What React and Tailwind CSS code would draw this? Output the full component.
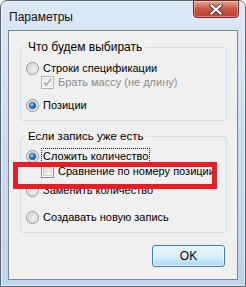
import React from "react";

const Radio = ({ checked }) => (
  <svg width="13" height="13" viewBox="0 0 13 13" className="shrink-0">
    <defs>
      <linearGradient id="rb" x1="0" y1="0" x2="1" y2="1">
        <stop offset="0" stopColor="#d6d6d6" />
        <stop offset="1" stopColor="#f8f8f8" />
      </linearGradient>
      <radialGradient id="rdot" cx="0.4" cy="0.35" r="0.7">
        <stop offset="0" stopColor="#b8e6ff" />
        <stop offset="0.45" stopColor="#2a8ad8" />
        <stop offset="1" stopColor="#0d3f7a" />
      </radialGradient>
    </defs>
    <circle cx="6.5" cy="6.5" r="6" fill="#f4f4f4" stroke="#8e8f8f" strokeWidth="1" />
    <circle cx="6.5" cy="6.5" r="4.5" fill="url(#rb)" stroke="#c8c8c8" strokeWidth="0.6" />
    {checked && <circle cx="6.5" cy="6.5" r="3.3" fill="url(#rdot)" stroke="#1b4f86" strokeWidth="0.5" />}
  </svg>
);

const Check = ({ checked, disabled }) => (
  <svg width="13" height="13" viewBox="0 0 13 13" className="shrink-0">
    <defs>
      <linearGradient id="cb" x1="0" y1="0" x2="1" y2="1">
        <stop offset="0" stopColor="#d8d8d8" />
        <stop offset="1" stopColor="#f9f9f9" />
      </linearGradient>
    </defs>
    <rect x="0.5" y="0.5" width="12" height="12" fill="#fcfcfc" stroke={disabled ? "#b5b5b5" : "#8e8f8f"} />
    <rect x="2.5" y="2.5" width="8" height="8" fill={disabled ? "#f4f4f4" : "url(#cb)"} stroke={disabled ? "#dedede" : "#c3c3c3"} strokeWidth="0.8" />
    {checked && (
      <path d="M3.3 6.6 L5.3 9 L9.7 3.2" fill="none" stroke={disabled ? "#a9a9a9" : "#3a5f8a"} strokeWidth="1.6" />
    )}
  </svg>
);

const Row = ({ className, children }) => (
  <div className={`flex items-center h-[14px] whitespace-nowrap ${className}`}>{children}</div>
);

export default function App() {
  return (
    <div className="w-[246px] h-[287px] relative font-['Liberation_Sans',Arial,sans-serif] text-[11px] leading-[15px] text-black">
      <div className="w-full h-full flex flex-col rounded-t-[7px] border border-[#5a6472] bg-gradient-to-b from-[#dce9f8] via-[#c9dcf2] to-[#bed3ec] shadow-[inset_0_0_0_1px_rgba(255,255,255,0.6)]">
        <div className="h-[29px] flex items-start shrink-0">
          <span className="ml-[8px] mt-[9px] text-[12px] text-[#111]">Параметры</span>
          <div className="ml-auto mr-[6px] -mt-px w-[46px] h-[18px] rounded-b-[4px] border border-[#6e2a22] bg-gradient-to-b from-[#e9a99b] via-[#c9533f] to-[#c0412d] flex items-center justify-center shadow-[inset_0_0_0_1px_rgba(255,255,255,0.35)]">
            <svg width="14" height="11" viewBox="0 0 14 11">
              <path d="M2.5 1.5 L11.5 9.5 M11.5 1.5 L2.5 9.5" stroke="#3b3b3b" strokeWidth="4" strokeLinecap="square" />
              <path d="M2.5 1.5 L11.5 9.5 M11.5 1.5 L2.5 9.5" stroke="#ffffff" strokeWidth="2.2" strokeLinecap="square" />
            </svg>
          </div>
        </div>
        <div className="mx-[7px] mb-[6px] flex-1 border border-[#7c8797] bg-[#f0f0f0] flex flex-col">
          <fieldset className="mt-[9px] ml-[11px] mr-[10px] border border-[#d5dfe5] rounded-[3px] pb-[8px]">
            <legend className="ml-[4px] px-[3px] text-[12px]">Что будем выбирать</legend>
            <Row className="mt-[6px] ml-[5px] gap-[4px]">
              <Radio />
              <span>Строки спецификации</span>
            </Row>
            <Row className="ml-[20px] gap-[4px]">
              <Check checked disabled />
              <span className="text-[#8d8d8d]">Брать массу (не длину)</span>
            </Row>
            <Row className="mt-[9px] ml-[5px] gap-[4px]">
              <Radio checked />
              <span>Позиции</span>
            </Row>
          </fieldset>
          <fieldset className="mt-[8px] ml-[11px] mr-[10px] border border-[#d5dfe5] rounded-[3px] pb-[8px]">
            <legend className="ml-[4px] px-[3px] text-[11.5px]">Если запись уже есть</legend>
            <Row className="mt-[5px] ml-[5px] gap-[3px]">
              <Radio checked />
              <span className="outline outline-1 outline-dotted outline-[#222] px-px">Сложить количество</span>
            </Row>
            <Row className="mt-[1px] ml-[20px] gap-[4px]">
              <Check />
              <span>Сравнение по номеру позиции</span>
            </Row>
            <Row className="mt-[5px] ml-[5px] gap-[4px]">
              <Radio />
              <span>Заменить количество</span>
            </Row>
            <Row className="mt-[13px] ml-[5px] gap-[4px]">
              <Radio />
              <span>Создавать новую запись</span>
            </Row>
          </fieldset>
          <div className="flex justify-end mt-[12px] mr-[12px]">
            <button className="w-[73px] h-[22px] rounded-[3px] border border-[#3c7fb1] bg-gradient-to-b from-[#eaf6fd] via-[#d9f0fc] to-[#a7d9f5] shadow-[inset_0_0_0_1px_rgba(255,255,255,0.7)] text-[12px]">
              OK
            </button>
          </div>
        </div>
      </div>
      <div className="absolute left-[13px] top-[162px] w-[204px] h-[27px] border-[5px] border-[#ec1c24]" />
    </div>
  );
}
